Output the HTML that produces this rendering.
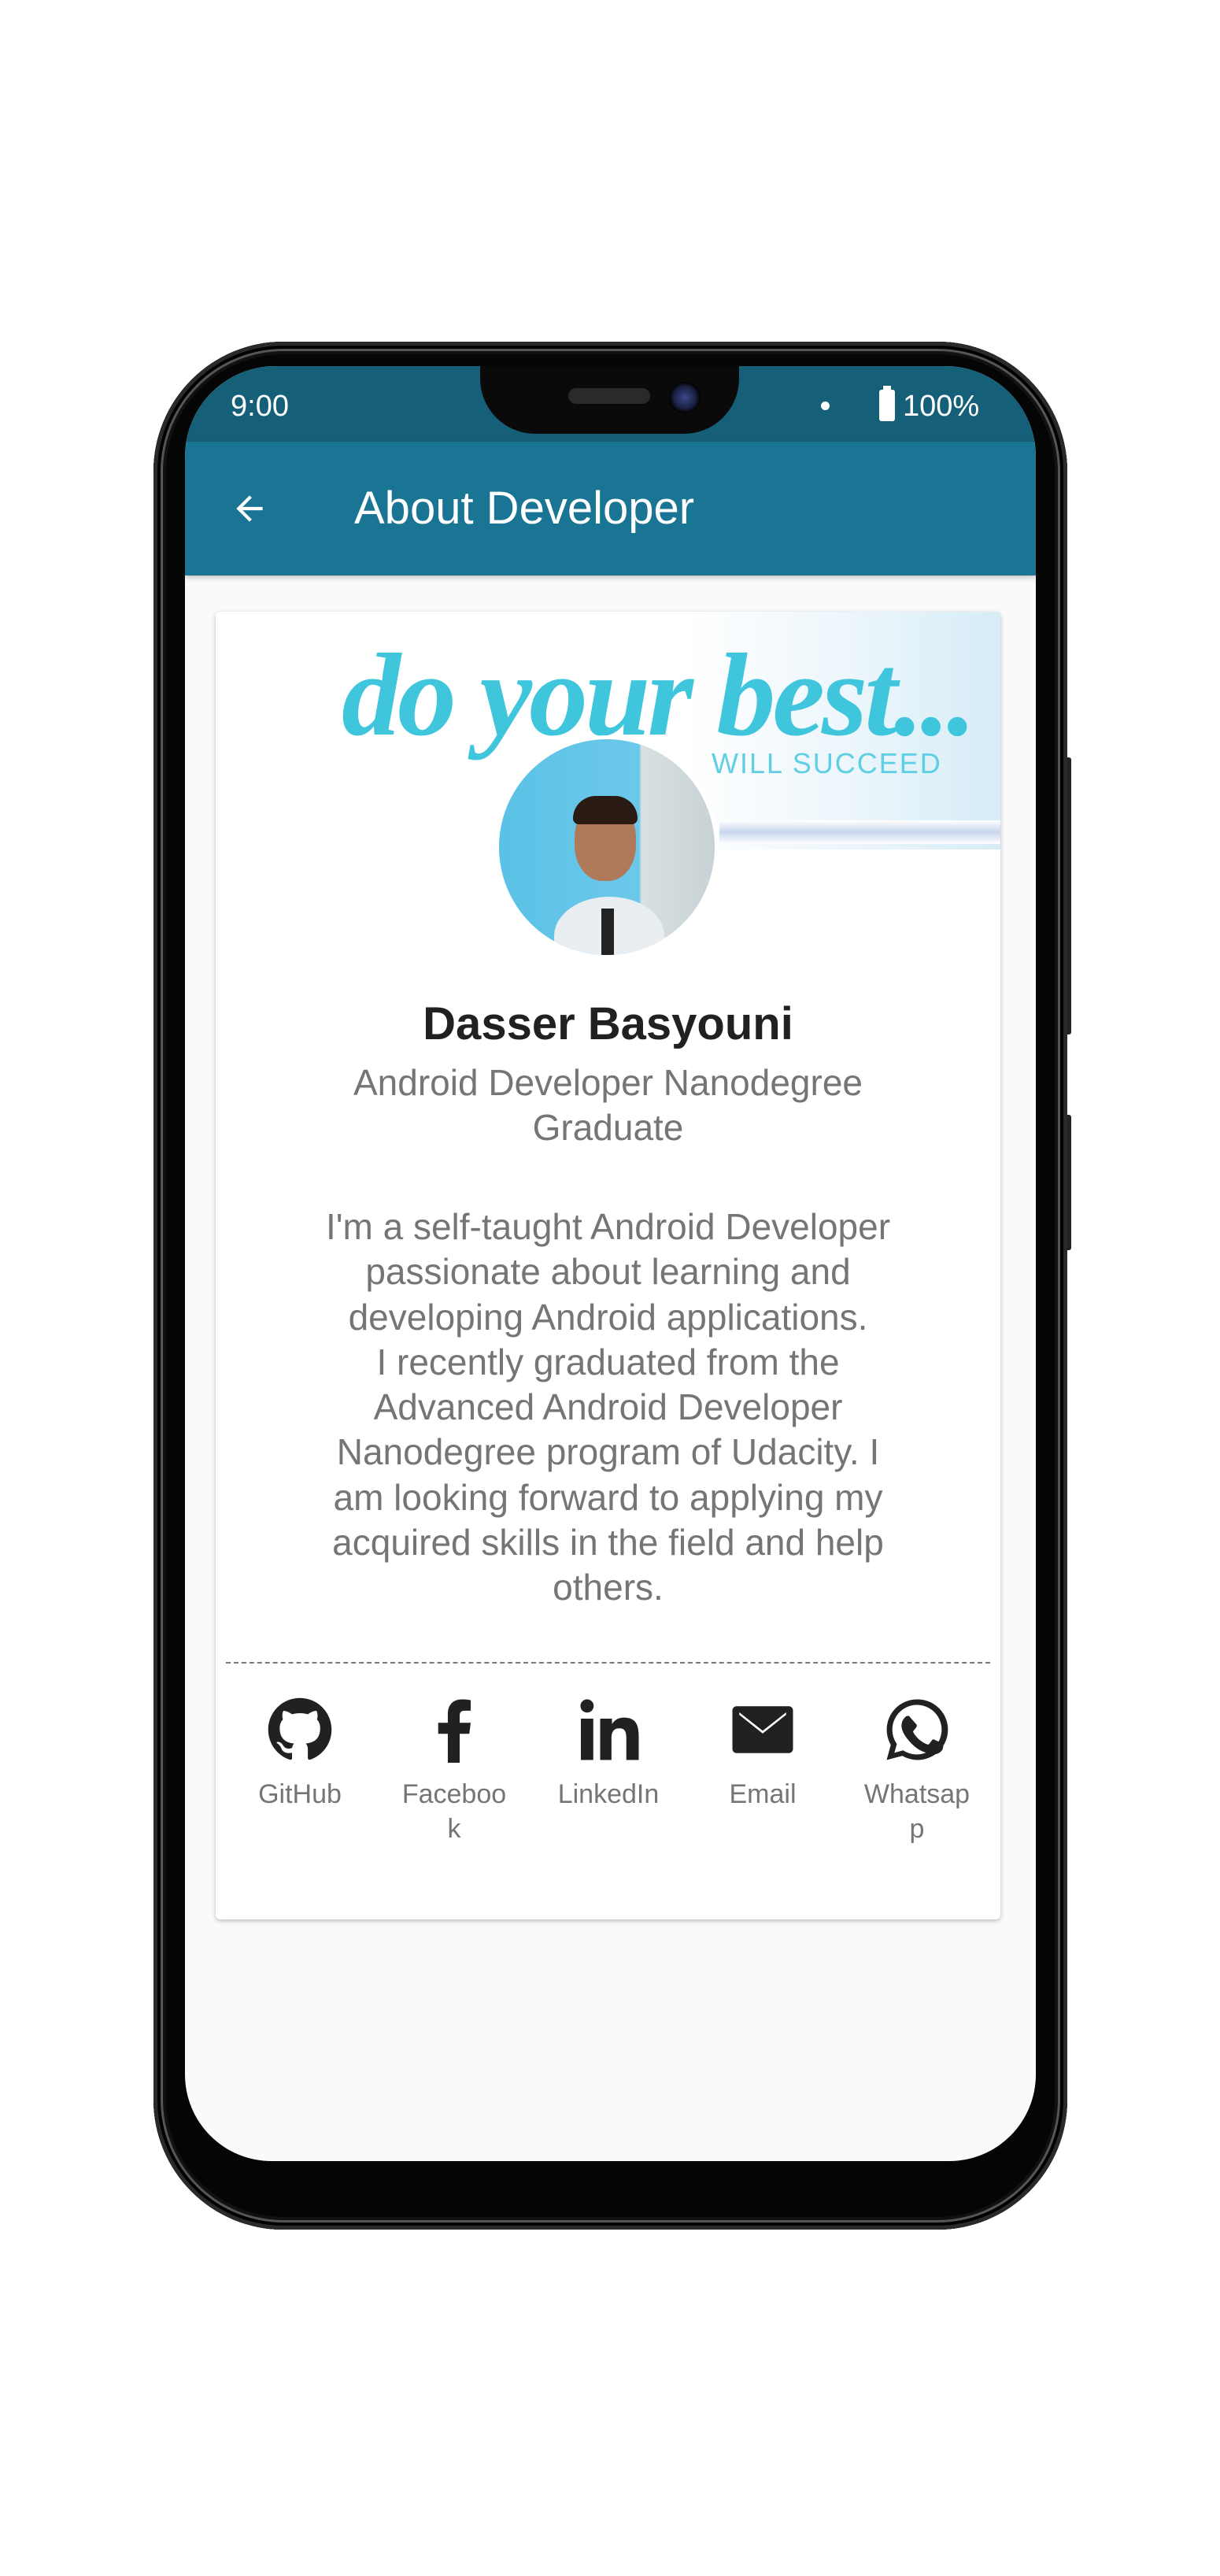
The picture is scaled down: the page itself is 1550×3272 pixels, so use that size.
<!DOCTYPE html>
<html><head><meta charset="utf-8">
<style>
*{margin:0;padding:0;box-sizing:border-box}
body{width:1550px;height:3272px;background:#fff;position:relative;overflow:hidden;font-family:"Liberation Sans",Roboto,sans-serif}
.abs{position:absolute}
.phone{left:195px;top:434px;width:1161px;height:2398px;border-radius:165px;background:#050505;box-shadow:inset 0 0 0 5px #2a2a2a,inset 0 0 0 9px #000,inset 0 0 0 12px #555,inset 0 0 0 16px #111}
.screen{left:235px;top:465px;width:1081px;height:2280px;border-radius:115px 115px 110px 110px;background:#fafafa;overflow:hidden}
.status{left:0;top:0;width:1081px;height:96px;background:#165f78}
.appbar{left:0;top:96px;width:1081px;height:170px;background:#1a7594;box-shadow:0 3px 6px rgba(0,0,0,.2)}
.notch{left:375px;top:0;width:329px;height:86px;background:#0a0a0a;border-radius:0 0 70px 70px}
.card{left:39px;top:312px;width:997px;height:1661px;background:#fff;border-radius:6px;box-shadow:0 2px 6px rgba(0,0,0,.25);overflow:hidden}
.t{position:absolute;left:0;width:100%;text-align:center}
.ic{position:absolute;top:1378px;width:190px;text-align:center;color:#757575;font-size:34px;line-height:44px}
.ic svg{display:block;margin:0 auto 18px}
</style></head><body>
<div class="abs" style="left:1353px;top:962px;width:8px;height:352px;background:#222;border-radius:3px"></div>
<div class="abs" style="left:1353px;top:1416px;width:8px;height:172px;background:#222;border-radius:3px"></div>
<div class="abs phone"></div>
<div class="abs screen">
  <div class="abs status"></div>
  <div class="abs notch">
    <div class="abs" style="left:112px;top:28px;width:104px;height:20px;border-radius:10px;background:#2a2a2a"></div>
    <div class="abs" style="left:240px;top:20px;width:40px;height:40px;border-radius:50%;background:radial-gradient(circle,#3a4a8a 0,#1a2040 50%,#000 70%)"></div>
  </div>
  <div class="abs" style="left:58px;top:30px;color:#fff;font-size:38px">9:00</div>
  <div class="abs" style="left:808px;top:45px;width:11px;height:11px;border-radius:50%;background:#fff"></div>
  <div class="abs" style="left:882px;top:30px;width:20px;height:40px;background:#fff;border-radius:3px"></div>
  <div class="abs" style="left:887px;top:25px;width:10px;height:6px;background:#fff"></div>
  <div class="abs" style="left:912px;top:30px;color:#fff;font-size:38px">100%</div>
  <div class="abs appbar">
    <svg class="abs" style="left:56px;top:60px" width="52" height="50" viewBox="0 0 24 24"><path d="M20 11H7.8l5.6-5.6L12 4l-8 8 8 8 1.4-1.4L7.8 13H20z" fill="#fff"/></svg>
    <div class="abs" style="left:215px;top:51px;color:#fff;font-size:58px;font-weight:500">About Developer</div>
  </div>
  <div class="abs card">
    <div class="abs" style="left:0;top:0;width:997px;height:302px;background:linear-gradient(90deg,#fff 0,#fff 60%,#e8f4fa 85%,#d6ecf6 100%)"></div>
    <div class="abs" style="left:640px;top:265px;width:362px;height:30px;background:linear-gradient(#fff,#c8d6ee,#fff)"></div>
    <div class="abs" style="left:160px;top:20px;color:#3fc6dc;font-family:'Liberation Serif',serif;font-style:italic;font-weight:bold;font-size:150px;letter-spacing:-4px">do your best...</div>
    <div class="abs" style="left:630px;top:172px;color:#5fcfe3;font-size:36px;letter-spacing:2px">WILL SUCCEED</div>
    <div class="abs" style="left:355px;top:157px;width:284px;height:284px;border-radius:50%;background:#fff"></div>
    <div class="abs" style="left:360px;top:162px;width:274px;height:274px;border-radius:50%;overflow:hidden;background:linear-gradient(90deg,#5ac2e6 0,#6cc8ea 65%,#d8e0e2 66%,#c8d2d4 100%)">
      <div class="abs" style="left:70px;top:200px;width:140px;height:100px;border-radius:50% 50% 0 0;background:#e8eef2"></div>
      <div class="abs" style="left:96px;top:80px;width:78px;height:100px;border-radius:45%;background:#b07a5a"></div>
      <div class="abs" style="left:94px;top:72px;width:82px;height:36px;border-radius:40px 40px 10px 10px;background:#2a1a14"></div>
      <div class="abs" style="left:130px;top:215px;width:16px;height:60px;background:#222"></div>
    </div>
    <div class="t" style="top:490px;font-size:58px;font-weight:bold;color:#212121">Dasser Basyouni</div>
    <div class="t" style="top:570px;font-size:46px;line-height:57px;color:#757575;padding:0 140px">Android Developer Nanodegree Graduate</div>
    <div class="t" style="top:753px;font-size:46px;line-height:57.3px;color:#757575;padding:0 128px">I'm a self-taught Android Developer passionate about learning and developing Android applications.<br>I recently graduated from the Advanced Android Developer Nanodegree program of Udacity. I am looking forward to applying my acquired skills in the field and help others.</div>
    <div class="abs" style="left:13px;top:1334px;width:971px;border-top:2px dashed #777"></div>
    <div class="ic" style="left:12px"><svg width="84" height="84" viewBox="0 0 24 24"><path fill="#212121" d="M12 .5C5.65.5.5 5.65.5 12c0 5.08 3.29 9.39 7.86 10.91.58.1.79-.25.79-.56v-2c-3.2.7-3.87-1.54-3.87-1.54-.52-1.33-1.28-1.68-1.28-1.68-1.04-.71.08-.7.08-.7 1.15.08 1.76 1.18 1.76 1.18 1.03 1.76 2.69 1.25 3.35.96.1-.74.4-1.25.73-1.54-2.550-.29-5.24-1.28-5.24-5.68 0-1.26.45-2.28 1.18-3.09-.12-.29-.51-1.46.11-3.04 0 0 .97-.31 3.17 1.18a11 11 0 0 1 5.77 0c2.2-1.49 3.17-1.18 3.17-1.18.63 1.58.23 2.75.11 3.04.74.81 1.18 1.83 1.18 3.09 0 4.42-2.69 5.39-5.26 5.67.41.36.78 1.06.78 2.14v3.17c0 .31.21.67.8.56A11.5 11.5 0 0 0 23.5 12C23.5 5.65 18.35.5 12 .5z"/></svg>GitHub</div>
    <div class="ic" style="left:208px"><svg width="84" height="84" viewBox="0 0 24 24"><path fill="#212121" d="M14 24V13.5h3.5l.5-4h-4V7c0-1.1.3-1.9 1.9-1.9H18V1.3C17.6 1.2 16.3 1 14.8 1 11.7 1 9.7 2.9 9.7 6.4v3.1H6.2v4h3.5V24z"/></svg>Faceboo<br>k</div>
    <div class="ic" style="left:404px"><svg width="84" height="84" viewBox="0 0 24 24"><path fill="#212121" d="M2 8h4.5v15H2zM4.25 1a2.4 2.4 0 1 1 0 4.8 2.4 2.4 0 0 1 0-4.8zM9 8h4.3v2c.6-1.2 2.1-2.4 4.3-2.4 4.6 0 5.4 3 5.4 6.9V23h-4.5v-7.5c0-1.8 0-4-2.5-4s-2.9 1.9-2.9 3.9V23H9z"/></svg>LinkedIn</div>
    <div class="ic" style="left:600px"><svg width="84" height="84" viewBox="0 0 24 24"><path fill="#212121" d="M2.5 3.5h19c.8 0 1.5.7 1.5 1.5v14c0 .8-.7 1.5-1.5 1.5h-19C1.7 20.5 1 19.8 1 19V5c0-.8.7-1.5 1.5-1.5zm1 2.2v.9l8.5 6.8 8.5-6.8v-.9L12 12.4z"/></svg>Email</div>
    <div class="ic" style="left:796px"><svg width="84" height="84" viewBox="0 0 24 24"><path fill="#212121" d="M12 1a11 11 0 0 0-9.5 16.5L1 23l5.7-1.5A11 11 0 1 0 12 1zm0 2a9 9 0 1 1-4.7 16.7l-.3-.2-3.2.9.9-3.2-.2-.3A9 9 0 0 1 12 3zm-3.3 4c-.3 0-.7.1-1 .5-.4.4-1.3 1.3-1.3 3.1s1.3 3.6 1.5 3.9c.2.2 2.6 4 6.4 5.5 3.2 1.2 3.8 1 4.5.9.7-.1 2.2-.9 2.5-1.8.3-.9.3-1.6.2-1.8-.1-.2-.3-.3-.7-.5l-2.5-1.2c-.3-.1-.6-.2-.8.2l-1.1 1.4c-.2.2-.4.3-.8.1-.4-.2-1.5-.6-2.9-1.8-1.1-1-1.8-2.1-2-2.5-.2-.4 0-.6.2-.8l.6-.7c.2-.2.2-.4.4-.6.1-.3 0-.5 0-.7L9.5 7.5c-.3-.6-.5-.5-.8-.5z"/></svg>Whatsap<br>p</div>
  </div>
</div>
</body></html>
